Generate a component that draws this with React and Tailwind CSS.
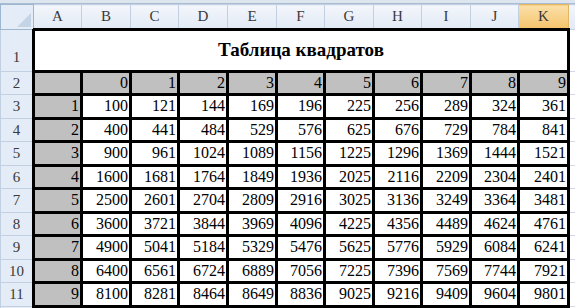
import React from 'react';

const colWidths = [48, 49, 48, 49, 49, 48, 49, 48, 49, 48, 50];
const letters = ['A', 'B', 'C', 'D', 'E', 'F', 'G', 'H', 'I', 'J', 'K'];
const digits = [0, 1, 2, 3, 4, 5, 6, 7, 8, 9];

const App = () => {
  return (
    <div className="w-[575px] h-[308px] overflow-hidden bg-white font-serif text-black">
      {/* strip under the formula bar */}
      <div className="h-[4px] bg-[#dde5ef] border-b border-[#a9bcd4]" />

      <table className="table-fixed border-collapse font-['Liberation_Serif']" style={{ width: 575 }}>
        <colgroup>
          <col style={{ width: 33 }} />
          {colWidths.map((w, i) => (
            <col key={i} style={{ width: w }} />
          ))}
          <col style={{ width: 7 }} />
        </colgroup>
        <tbody>
          {/* Column headers */}
          <tr className="h-[23px]">
            <td className="relative p-0 bg-[#e4ecf7] border border-[#9eb6ce]">
              <div className="absolute right-[2px] bottom-[2px] w-0 h-0 border-l-[14px] border-l-transparent border-b-[14px] border-b-[#c5d3e6]" />
            </td>
            {letters.map((l) => (
              <td
                key={l}
                className={
                  l === 'K'
                    ? 'p-0 text-center text-[15px] text-[#3a3a3a] border border-[#e0b564] bg-gradient-to-b from-[#fbe0a9] to-[#f5c46a]'
                    : 'p-0 text-center text-[15px] text-[#3a3a3a] border border-[#c2d0e2] bg-gradient-to-b from-[#f3f6fb] to-[#e2eaf5]'
                }
              >
                {l}
              </td>
            ))}
            <td className="p-0 border border-[#c2d0e2] bg-gradient-to-b from-[#f3f6fb] to-[#e2eaf5]" />
          </tr>

          {/* Row 1: title */}
          <tr className="h-[42px]">
            <td className="p-0 pb-[2px] align-bottom text-center text-[15px] text-[#3a3a3a] bg-[#e4ecf7] border border-[#c2d0e2]">
              1
            </td>
            <td
              colSpan={11}
              className="p-0 text-center align-middle font-bold text-[19px] border-[3px] border-black"
            >
              Таблица квадратов
            </td>
            <td className="p-0 border border-[#d0d7e5]" />
          </tr>

          {/* Row 2: header numbers */}
          <tr className="h-[22.4px]">
            <td className="p-0 text-center text-[15px] text-[#3a3a3a] bg-[#e4ecf7] border border-[#c2d0e2]">
              2
            </td>
            <td className="p-0 bg-[#c0c0c0] border-[3px] border-black" />
            {digits.map((d) => (
              <td
                key={d}
                className="p-0 pr-[1px] text-right text-[16px] leading-none bg-[#c0c0c0] border-[3px] border-black"
              >
                {d}
              </td>
            ))}
            <td className="p-0 border border-[#d0d7e5]" />
          </tr>

          {/* Rows 3..11 */}
          {digits.slice(1).map((a, r) => (
            <tr key={a} className="h-[22.4px]">
              <td className="p-0 text-center text-[15px] text-[#3a3a3a] bg-[#e4ecf7] border border-[#c2d0e2]">
                {r + 3}
              </td>
              <td className="p-0 pr-[1px] text-right text-[16px] leading-none bg-[#c0c0c0] border-[3px] border-black">
                {a}
              </td>
              {digits.map((b) => {
                const n = a * 10 + b;
                return (
                  <td
                    key={b}
                    className="p-0 pr-[1px] text-right text-[16px] leading-none border-[3px] border-black"
                  >
                    {n * n}
                  </td>
                );
              })}
              <td className="p-0 border border-[#d0d7e5]" />
            </tr>
          ))}

          {/* Row 12 (partly visible) */}
          <tr className="h-[23px]">
            <td className="p-0 bg-[#e4ecf7] border border-[#c2d0e2]" />
            {letters.map((l) => (
              <td key={l} className="p-0 border border-[#d0d7e5]" />
            ))}
            <td className="p-0 border border-[#d0d7e5]" />
          </tr>
        </tbody>
      </table>
    </div>
  );
};

export default App;
